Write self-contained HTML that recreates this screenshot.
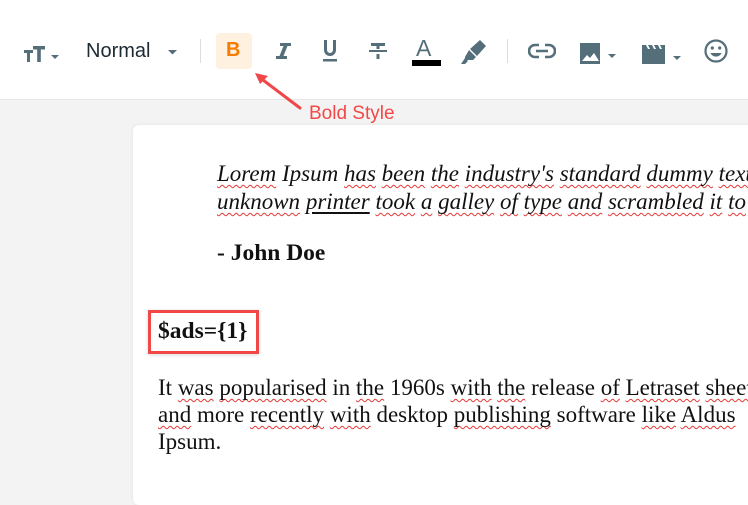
<!DOCTYPE html>
<html><head><meta charset="utf-8">
<style>
html,body{margin:0;padding:0;width:748px;height:484px;overflow:hidden;background:#f3f3f3;font-family:"Liberation Sans",sans-serif}
.tb{position:absolute;left:0;top:0;width:748px;height:99px;background:#fff;border-bottom:1px solid #e6e6e6}
.a{position:absolute}
.ic{fill:#546e7a}
.card{position:absolute;left:133px;top:125px;width:640px;height:380px;background:#fff;border-radius:6px;box-shadow:0 0 3px rgba(0,0,0,.08);overflow:hidden}
.s{font-family:"Liberation Serif",serif;font-size:23.5px;color:#111;white-space:nowrap;position:absolute}
.w{text-decoration:underline wavy #e53935;text-decoration-thickness:1px;text-underline-offset:3px;text-decoration-skip-ink:none}
.u{text-decoration:underline;text-underline-offset:3px}
</style></head><body>
<div class="tb">
  <svg class="a" style="left:22px;top:42px" width="42" height="24" viewBox="0 0 42 24">
    <path class="ic" d="M2 8h9v3H8v9H5v-9H2z M11 4h12v3.5h-4.2V20h-3.6V7.5H11z"/>
    <path class="ic" d="M29 13h8l-4 4z"/>
  </svg>
  <div class="a" style="left:86px;top:40px;font-size:20px;color:#1d2a33">Normal</div>
  <svg class="a" style="left:166px;top:48px" width="14" height="8"><path class="ic" d="M2 2h9l-4.5 4.5z"/></svg>
  <div class="a" style="left:200px;top:39px;width:1px;height:24px;background:#ddd"></div>
  <div class="a" style="left:216px;top:33px;width:36px;height:36px;background:#fff1e0;border-radius:4px"></div>
  <div class="a" style="left:226px;top:39px;font-size:20px;font-weight:bold;color:#f57c00">B</div>
  <svg class="a" style="left:272px;top:40px" width="22" height="22"><path class="ic" d="M8 3h11v3h-3.5l-4 10H15v3H4v-3h3.5l4-10H8z"/></svg>
  <svg class="a" style="left:318px;top:38px" width="24" height="26"><path class="ic" d="M6 2h3v10a3 3 0 0 0 6 0V2h3v10a6 6 0 0 1-12 0z M5 21h14v2.5H5z"/></svg>
  <svg class="a" style="left:366px;top:39px" width="24" height="24"><path class="ic" d="M5 4h14v3h-5.5v3h-3V7H5z M3 11h18v2H3z M10.5 15h3v5h-3z"/></svg>
  <div class="a" style="left:416px;top:35px;font-size:23px;color:#546e7a">A</div>
  <div class="a" style="left:412px;top:60px;width:29px;height:6px;background:#000"></div>
  <svg class="a" style="left:460px;top:38px" width="30" height="28" viewBox="0 0 30 28"><path class="ic" d="M20 2l6 6-9 10-7-7z M9 12l7 7-3 3H5v-3z M1 26l4-6 3 3-3 3z"/></svg>
  <div class="a" style="left:507px;top:39px;width:1px;height:24px;background:#ddd"></div>
  <svg class="a" style="left:528px;top:41px" width="28" height="20" viewBox="0 0 28 20"><path fill="none" stroke="#546e7a" stroke-width="2.6" d="M11 4H7a6 6 0 0 0 0 12h4 M17 4h4a6 6 0 0 1 0 12h-4 M8 10h12"/></svg>
  <svg class="a" style="left:578px;top:41px" width="40" height="24" viewBox="0 0 40 24"><path class="ic" d="M2 2h20v21H2z"/><path fill="#fff" d="M4 20l5-6 3 3 4-5 5 8z"/><path class="ic" d="M30 13h8l-4 4z"/></svg>
  <svg class="a" style="left:640px;top:43px" width="42" height="22" viewBox="0 0 42 22"><path class="ic" d="M2 2h23v19H2z"/><path fill="#fff" d="M6 2h2l2 4H8z M12 2h2l2 4h-2z M18 2h2l2 4h-2z"/><path class="ic" d="M33 13h8l-4 4z"/></svg>
  <svg class="a" style="left:703px;top:38px" width="26" height="26" viewBox="0 0 26 26"><circle cx="13" cy="13" r="10.5" fill="none" stroke="#546e7a" stroke-width="2.2"/><circle cx="9.3" cy="10" r="1.6" fill="#546e7a"/><circle cx="16.7" cy="10" r="1.6" fill="#546e7a"/><path d="M7.5 15a6 6 0 0 0 11 0z" fill="#546e7a"/></svg>
</div>
<svg class="a" style="left:250px;top:68px" width="60" height="45"><path d="M9 9L50 40" stroke="#f04848" stroke-width="3" stroke-linecap="round"/><path d="M5 5l13 3-8 8z" fill="#f04848"/></svg>
<div class="a" style="left:309px;top:103px;font-size:19px;color:#f44747">Bold Style</div>
<div class="card">
  <div class="s" style="left:84px;top:35px;font-style:italic;line-height:28px;font-size:23px"><span class="w">Lorem</span> Ipsum <span class="w">has</span> <span class="w">been</span> <span class="w">the</span> <span class="w">industry's</span> <span class="w">standard</span> <span class="w">dummy</span> <span class="w">text</span><br><span class="w">unknown</span> <span class="u">printer</span> <span class="w">took</span> <span class="w">a</span> <span class="w">galley</span> <span class="w">of</span> <span class="w">type</span> <span class="w">and</span> <span class="w">scrambled</span> <span class="w">it</span> <span class="w">to</span></div>
  <div class="s" style="left:84px;top:115px;font-weight:bold">- John Doe</div>
  <div class="a" style="left:15px;top:185px;width:105px;height:38px;border:3px solid #f04848;box-shadow:0 1px 4px rgba(0,0,0,.15)"></div>
  <div class="s" style="left:25px;top:193px;font-weight:bold">$ads={1}</div>
  <div class="s" style="left:25px;top:249px;line-height:27px;font-size:23px">It <span class="w">was</span> <span class="w">popularised</span> in <span class="w">the</span> 1960s <span class="w">with</span> <span class="w">the</span> release <span class="w">of</span> <span class="w">Letraset</span> <span class="w">sheets</span><br><span class="w">and</span> more <span class="w">recently</span> <span class="w">with</span> desktop <span class="w">publishing</span> software <span class="w">like</span> <span class="w">Aldus</span><br>Ipsum.</div>
</div>
</body></html>
